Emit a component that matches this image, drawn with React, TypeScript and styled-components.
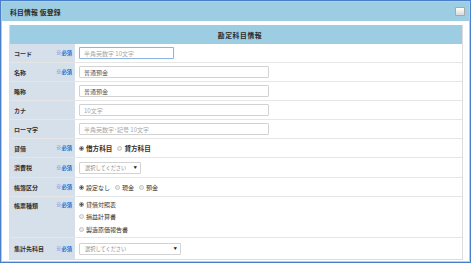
import styled, { createGlobalStyle } from 'styled-components';

const GlobalStyle = createGlobalStyle`
    html, body {
        margin: 0;
        padding: 0;
        background: #ffffff;
    }
    body {
        font-family: 'Noto Sans CJK JP', 'Noto Sans', sans-serif;
        color: #333333;
    }
    * {
        box-sizing: border-box;
    }
`;

const Frame = styled.div`
    width: 471px;
    height: 263px;
    border: 1px solid #4a7fcb;
    box-shadow: inset 0 0 0 1px #b4cdee;
    display: flex;
    flex-direction: column;
    background: #ffffff;
`;

const TitleBar = styled.div`
    height: 19px;
    margin: 1px 1px 0 1px;
    background: #9dcde3;
    display: flex;
    align-items: center;
    justify-content: space-between;
    padding: 0 4px 0 8px;
`;

const Title = styled.span`
    font-size: 6.8px;
    font-weight: 700;
    color: #2a2a2a;
    letter-spacing: 0.2px;
`;

const MinButton = styled.span`
    width: 10px;
    height: 9px;
    border: 1px solid #a8a8a8;
    border-radius: 1px;
    background: linear-gradient(#ffffff, #d9d9d9);
`;

const Body = styled.div`
    padding: 4px 7px 0 8px;
`;

const Table = styled.div`
    border: 1px solid #dcdcdc;
    border-top: none;
`;

const TableHead = styled.div`
    height: 19px;
    background: #9dcde3;
    display: flex;
    align-items: center;
    justify-content: center;
    padding-left: 8px;
    font-size: 6.8px;
    font-weight: 700;
    letter-spacing: 0.6px;
    color: #2a2a2a;
`;

const Row = styled.div<{ $h: number }>`
    display: grid;
    grid-template-columns: 65px 1fr;
    height: ${({ $h }) => $h}px;
    border-bottom: 1px solid #e6e6e6;
    &:last-child {
        border-bottom: none;
    }
`;

const LabelCell = styled.div<{ $top?: boolean }>`
    background: #d6e0ea;
    display: flex;
    align-items: ${({ $top }) => ($top ? 'flex-start' : 'center')};
    justify-content: space-between;
    padding: ${({ $top }) => ($top ? '4px 3px 0 4px' : '0 3px 0 4px')};
    font-size: 6px;
    font-weight: 700;
    color: #333333;
`;

const Required = styled.span`
    font-size: 5.3px;
    font-weight: 700;
    color: #2f6fd0;
`;

const FieldCell = styled.div<{ $top?: boolean }>`
    display: flex;
    align-items: ${({ $top }) => ($top ? 'flex-start' : 'center')};
    padding: ${({ $top }) => ($top ? '1px 0 0 4px' : '0 0 0 4px')};
`;

const TextBox = styled.input<{ $w: number; $focus?: boolean }>`
    width: ${({ $w }) => $w}px;
    height: 12px;
    margin: 0;
    padding: 0 4px;
    border: 1px solid ${({ $focus }) => ($focus ? '#8cb4e4' : '#d2d2d2')};
    border-radius: 1px;
    box-shadow: ${({ $focus }) => ($focus ? '0 0 1px #aac8ee' : 'none')};
    font-family: 'Noto Sans CJK JP', 'Noto Sans', sans-serif;
    font-size: 6px;
    color: #555555;
    outline: none;
    &::placeholder {
        color: #a8a8a8;
    }
`;

const SelectBox = styled.div<{ $w: number }>`
    width: ${({ $w }) => $w}px;
    height: 12px;
    border: 1px solid #d2d2d2;
    border-radius: 1px;
    display: flex;
    align-items: center;
    justify-content: space-between;
    padding: 0 3px 0 5px;
    font-size: 5.2px;
    color: #888888;
`;

const Caret = styled.span`
    font-size: 3.5px;
    color: #222222;
`;

const RadioGroup = styled.div<{ $vertical?: boolean }>`
    display: flex;
    flex-direction: ${({ $vertical }) => ($vertical ? 'column' : 'row')};
    gap: ${({ $vertical }) => ($vertical ? '0' : '5px')};
`;

const RadioItem = styled.label<{ $bold?: boolean }>`
    display: flex;
    align-items: center;
    gap: 2px;
    height: 12.5px;
    font-size: ${({ $bold }) => ($bold ? '6.6px' : '6px')};
    font-weight: ${({ $bold }) => ($bold ? 700 : 400)};
    color: #333333;
`;

const Dot = styled.span<{ $on?: boolean }>`
    width: 5px;
    height: 5px;
    border-radius: 50%;
    border: 1px solid ${({ $on }) => ($on ? '#8a8a8a' : '#c4c4c4')};
    background: ${({ $on }) => ($on ? 'radial-gradient(circle, #555 0 1px, #e8e8e8 1.2px)' : '#ececec')};
`;

function Radios({ items, vertical, bold }: { items: string[]; vertical?: boolean; bold?: boolean }) {
    return (
        <RadioGroup $vertical={vertical}>
            {items.map((t, i) => (
                <RadioItem key={t} $bold={bold}>
                    <Dot $on={i === 0} />
                    {t}
                </RadioItem>
            ))}
        </RadioGroup>
    );
}

function Label({ text, required, top }: { text: string; required?: boolean; top?: boolean }) {
    return (
        <LabelCell $top={top}>
            <span>{text}</span>
            {required && <Required>※必須</Required>}
        </LabelCell>
    );
}

export default function App() {
    return (
        <>
            <GlobalStyle />
            <Frame>
                <TitleBar>
                    <Title>科目情報 仮登録</Title>
                    <MinButton />
                </TitleBar>
                <Body>
                    <Table>
                        <TableHead>勘定科目情報</TableHead>
                        <Row $h={19}>
                            <Label text="コード" required />
                            <FieldCell>
                                <TextBox $w={95} $focus placeholder="半角英数字 10文字" readOnly />
                            </FieldCell>
                        </Row>
                        <Row $h={19}>
                            <Label text="名称" required />
                            <FieldCell>
                                <TextBox $w={190} value="普通預金" readOnly />
                            </FieldCell>
                        </Row>
                        <Row $h={19}>
                            <Label text="略称" />
                            <FieldCell>
                                <TextBox $w={190} value="普通預金" readOnly />
                            </FieldCell>
                        </Row>
                        <Row $h={19}>
                            <Label text="カナ" />
                            <FieldCell>
                                <TextBox $w={190} placeholder="10文字" readOnly />
                            </FieldCell>
                        </Row>
                        <Row $h={19}>
                            <Label text="ローマ字" />
                            <FieldCell>
                                <TextBox $w={190} placeholder="半角英数字･記号 10文字" readOnly />
                            </FieldCell>
                        </Row>
                        <Row $h={19}>
                            <Label text="貸借" required />
                            <FieldCell>
                                <Radios items={['借方科目', '貸方科目']} bold />
                            </FieldCell>
                        </Row>
                        <Row $h={20}>
                            <Label text="消費税" required />
                            <FieldCell>
                                <SelectBox $w={62}>
                                    選択してください<Caret>▼</Caret>
                                </SelectBox>
                            </FieldCell>
                        </Row>
                        <Row $h={19}>
                            <Label text="帳簿区分" required />
                            <FieldCell>
                                <Radios items={['設定なし', '現金', '預金']} />
                            </FieldCell>
                        </Row>
                        <Row $h={41}>
                            <Label text="帳票種類" required top />
                            <FieldCell $top>
                                <Radios items={['貸借対照表', '損益計算書', '製造原価報告書']} vertical />
                            </FieldCell>
                        </Row>
                        <Row $h={21}>
                            <Label text="集計先科目" required />
                            <FieldCell>
                                <SelectBox $w={102}>
                                    選択してください<Caret>▼</Caret>
                                </SelectBox>
                            </FieldCell>
                        </Row>
                    </Table>
                </Body>
            </Frame>
        </>
    );
}
